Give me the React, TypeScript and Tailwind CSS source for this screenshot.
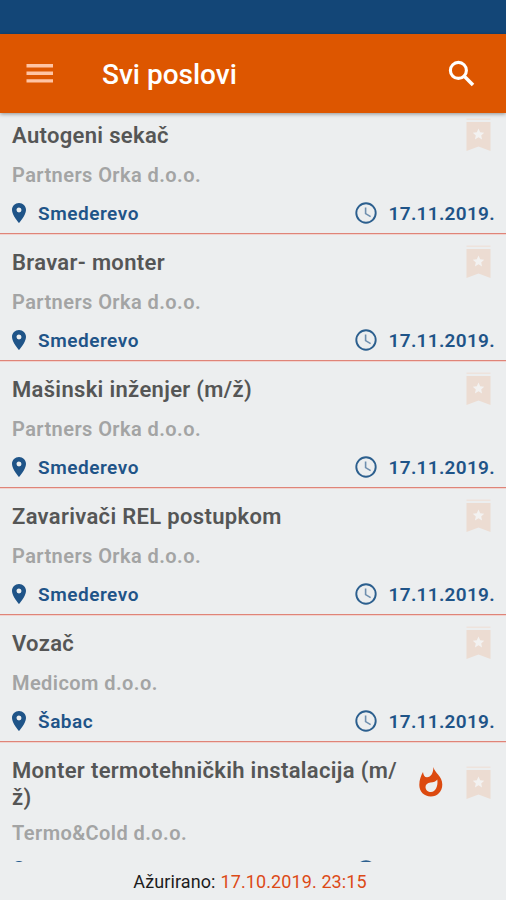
import { MdPlace } from 'react-icons/md';

interface Job {
    title: string;
    company: string;
    city?: string;
    date?: string;
    hot?: boolean;
}

const jobs: Job[] = [
    { title: 'Autogeni sekač', company: 'Partners Orka d.o.o.', city: 'Smederevo', date: '17.11.2019.' },
    { title: 'Bravar- monter', company: 'Partners Orka d.o.o.', city: 'Smederevo', date: '17.11.2019.' },
    { title: 'Mašinski inženjer (m/ž)', company: 'Partners Orka d.o.o.', city: 'Smederevo', date: '17.11.2019.' },
    { title: 'Zavarivači REL postupkom', company: 'Partners Orka d.o.o.', city: 'Smederevo', date: '17.11.2019.' },
    { title: 'Vozač', company: 'Medicom d.o.o.', city: 'Šabac', date: '17.11.2019.' },
    { title: 'Monter termotehničkih instalacija (m/\u200bž)', company: 'Termo&Cold d.o.o.', hot: true },
];

function MenuIcon() {
    return (
        <svg width="35" height="35" viewBox="0 0 35 35" fill="#ffc4a4">
            <path d="M4.5 8H31V11.4H4.5ZM4.5 15.6H31V19H4.5ZM4.5 23.2H31V26.6H4.5Z" />
        </svg>
    );
}

function SearchIcon() {
    return (
        <svg width="34" height="34" viewBox="0 0 34 34" fill="none" stroke="#fff" strokeWidth="3.1">
            <circle cx="13.4" cy="13.4" r="8" />
            <path d="M18.8 18.8L28 28" strokeWidth="3.5" />
        </svg>
    );
}

function BookmarkIcon() {
    return (
        <svg width="25" height="34" viewBox="0 0 25 34">
            <path d="M0.5 0.5H24.5V2H0.5Z" fill="#eee3dc" />
            <path d="M0.5 4H24.5V33L12.5 28.5L0.5 33Z" fill="#ecdcd2" />
            <path
                d="M12.5 10.5L14.2 14.3L18.2 14.7L15.2 17.4L16.1 21.4L12.5 19.3L8.9 21.4L9.8 17.4L6.8 14.7L10.8 14.3Z"
                fill="#f3f2f1"
            />
        </svg>
    );
}

function FlameIcon() {
    return (
        <svg width="24" height="30" viewBox="0 0 24 30">
            <path
                d="M14.5 0C15.5 6 23.3 9 23.3 17.5C23.3 25 18 29.5 11.8 29.5C5 29.5 0.3 24.5 0.3 18C0.3 13 2 8.5 4 5C4.3 8 5.5 10.3 8 10.3C12 10.3 14.2 6 14.5 0ZM18.3 12.5C17 14.5 14.5 15.3 11.5 15.5C8.5 15.8 6.5 17.5 6.5 20C6.5 23 9 25 12 25C16.5 25 19.3 19 18.3 12.5Z"
                fill="#dc4a10"
                fillRule="evenodd"
            />
        </svg>
    );
}

function ClockIcon() {
    return (
        <svg width="22" height="22" viewBox="0 0 22 22" fill="none" className="shrink-0">
            <circle cx="11" cy="11" r="9.7" stroke="#2c5f8e" strokeWidth="1.9" />
            <path d="M10.6 5.5V11.6L15.6 14.6" stroke="#6f8fae" strokeWidth="1.6" />
        </svg>
    );
}

function JobRow({ job }: { job: Job }) {
    return (
        <div className="border-b border-[#df8478] pt-[15px] pl-3 pr-[11px] shadow-[0_1px_0_#f0d3cf]">
            <div className="flex items-center">
                <h2 className="flex-1 text-[22px] leading-[27px] font-semibold tracking-[0.33px] text-[#555656]">{job.title}</h2>
                {job.hot && (
                    <div className="-mt-[5px] mr-[23px] ml-3 shrink-0">
                        <FlameIcon />
                    </div>
                )}
                <div className="-mt-[5px] mr-1 -mb-[3px] shrink-0">
                    <BookmarkIcon />
                </div>
            </div>
            <p className={`${job.hot ? 'mt-[9px]' : 'mt-[13px]'} text-[20px] leading-[26px] font-semibold tracking-[0.43px] text-[#a3a4a4]`}>
                {job.company}
            </p>
            <div className="mt-[11px] flex h-[34px] items-start justify-between text-[19px] leading-[26px] font-semibold text-[#1f5488]">
                <div className="flex items-center">
                    <MdPlace className="-ml-[5px] mr-[7px] size-6" />
                    <span className="min-h-7 pt-[2px] tracking-[0.53px]">{job.city}</span>
                </div>
                <div className="flex items-center gap-3">
                    <ClockIcon />
                    <span className="min-h-7 min-w-[106px] pt-[2px] tracking-[0.31px]">{job.date}</span>
                </div>
            </div>
        </div>
    );
}

export default function App() {
    return (
        <div className="flex h-[900px] w-[506px] flex-col overflow-hidden bg-[#eceeef] font-[Roboto,sans-serif]">
            {/* Status bar */}
            <div className="h-[34px] shrink-0 bg-[#134677]" />

            {/* Toolbar */}
            <header className="z-10 flex h-[79px] shrink-0 items-center bg-[#dd5600] pl-[22px] pr-[27px] shadow-[0_1px_4px_rgba(0,0,0,0.4)]">
                <MenuIcon />
                <h1 className="ml-[45px] flex-1 pt-[2px] text-[28px] leading-8 font-medium text-white">Svi poslovi</h1>
                <SearchIcon />
            </header>

            {/* Job list */}
            <main className="min-h-0 flex-1 overflow-hidden">
                <div className="-mt-[6px]">
                    {jobs.map((job) => (
                        <JobRow key={job.title} job={job} />
                    ))}
                </div>
            </main>

            <footer className="flex h-[38px] shrink-0 items-center justify-center gap-[5px] pr-[6px] text-[18px] tracking-[0.1px] text-[#1c1c1c]">
                Ažurirano: <span className="text-[#dc4a17]">17.10.2019. 23:15</span>
            </footer>
        </div>
    );
}
